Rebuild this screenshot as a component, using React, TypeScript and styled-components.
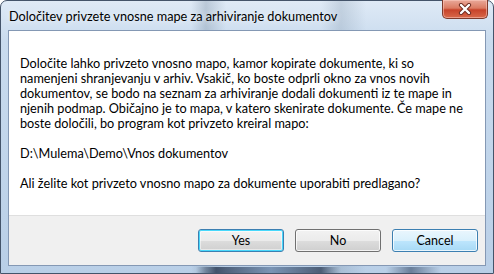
import styled, { createGlobalStyle, css } from "styled-components";

const GlobalStyle = createGlobalStyle`
  html, body {
    margin: 0;
    padding: 0;
    background: #ffffff;
  }
  body {
    font-family: Lato, "Noto Sans", sans-serif;
    font-size: 12px;
  }
`;

const bodyLines = [
  "Določite lahko privzeto vnosno mapo, kamor kopirate dokumente, ki so",
  "namenjeni shranjevanju v arhiv. Vsakič, ko boste odprli okno za vnos novih",
  "dokumentov, se bodo na seznam za arhiviranje dodali dokumenti iz te mape in",
  "njenih podmap. Običajno je to mapa, v katero skenirate dokumente. Če mape ne",
  "boste določili, bo program kot privzeto kreiral mapo:",
];

type ButtonKind = "default" | "normal" | "hover";

export default function App() {
  return (
    <>
      <GlobalStyle />
      <Window>
        <TitleBar>
          <Title>Določitev privzete vnosne mape za arhiviranje dokumentov</Title>
          <CloseButton aria-label="Close">
            <svg width="16" height="12" viewBox="0 0 16 12">
              <path
                d="M4 2 L12 10 M12 2 L4 10"
                stroke="#6b2a20"
                strokeWidth="4.2"
                strokeLinecap="round"
              />
              <path
                d="M4 2 L12 10 M12 2 L4 10"
                stroke="#ffffff"
                strokeWidth="2.4"
                strokeLinecap="round"
              />
            </svg>
          </CloseButton>
        </TitleBar>
        <Client>
          <Content>
            <Paragraph>
              {bodyLines.map((line) => (
                <Line key={line}>{line}</Line>
              ))}
            </Paragraph>
            <Paragraph>D:\Mulema\Demo\Vnos dokumentov</Paragraph>
            <Paragraph>Ali želite kot privzeto vnosno mapo za dokumente uporabiti predlagano?</Paragraph>
          </Content>
          <Footer>
            <DialogButton kind="default">Yes</DialogButton>
            <DialogButton kind="normal">No</DialogButton>
            <DialogButton kind="hover">Cancel</DialogButton>
          </Footer>
        </Client>
      </Window>
    </>
  );
}

const Window = styled.div`
  box-sizing: border-box;
  width: 494px;
  height: 274px;
  display: flex;
  flex-direction: column;
  padding: 0 7px 7px 7px;
  border: 1px solid #44546a;
  border-radius: 7px 7px 0 0;
  background:
    linear-gradient(
        90deg,
        rgba(40, 60, 90, 0) 0,
        rgba(40, 60, 90, 0) 195px,
        rgba(30, 45, 70, 0.75) 215px,
        rgba(60, 90, 130, 0.5) 270px,
        rgba(30, 45, 70, 0.7) 320px,
        rgba(40, 60, 90, 0) 340px,
        rgba(40, 60, 90, 0) 385px,
        rgba(40, 60, 90, 0.55) 410px,
        rgba(40, 60, 90, 0) 440px
      )
      bottom / 100% 6px no-repeat,
    linear-gradient(
      90deg,
      rgba(255, 255, 255, 0) 0,
      rgba(255, 255, 255, 0) 190px,
      rgba(120, 140, 160, 0.35) 205px,
      rgba(255, 255, 255, 0) 225px,
      rgba(255, 255, 255, 0) 320px,
      rgba(120, 140, 160, 0.25) 340px,
      rgba(255, 255, 255, 0) 365px
    ),
    linear-gradient(180deg, #dfeaf6 0, #c9dbee 40px, #b9cfe7 100%);
`;

const TitleBar = styled.div`
  height: 29px;
  display: flex;
  align-items: flex-start;
  justify-content: space-between;
  flex-shrink: 0;
`;

const Title = styled.div`
  padding: 8px 0 0 1px;
  color: #000000;
  font-size: 12.7px;
  line-height: 15px;
  white-space: nowrap;
  text-shadow: 0 0 6px rgba(255, 255, 255, 0.9);
`;

const CloseButton = styled.div`
  box-sizing: border-box;
  width: 46px;
  height: 19px;
  margin-top: -1px;
  margin-right: -2px;
  display: flex;
  align-items: center;
  justify-content: center;
  border: 1px solid #7d3a2c;
  border-top: none;
  border-radius: 0 0 5px 5px;
  background: linear-gradient(180deg, #e9a99a 0, #db7b63 45%, #c7432a 55%, #d8694a 100%);
  box-shadow: inset 0 0 0 1px rgba(255, 210, 200, 0.5);
`;

const Client = styled.div`
  flex: 1;
  display: flex;
  flex-direction: column;
  border: 1px solid #8498b4;
  background: #ffffff;
`;

const Content = styled.div`
  flex: 1;
  display: flex;
  flex-direction: column;
  gap: 15px;
  padding: 25px 12px 0 11px;
  color: #000000;
  font-size: 12.7px;
  line-height: 15px;
`;

const Paragraph = styled.div`
  white-space: nowrap;
`;

const Line = styled.div`
  white-space: nowrap;
`;

const Footer = styled.div`
  height: 49px;
  display: flex;
  align-items: center;
  justify-content: flex-end;
  gap: 11px;
  padding-right: 7px;
  background: #f0f0f0;
  border-top: 1px solid #dfdfdf;
`;

const DialogButton = styled.div<{ kind: ButtonKind }>`
  box-sizing: border-box;
  width: 86px;
  height: 23px;
  display: flex;
  align-items: center;
  justify-content: center;
  border: 1px solid #707070;
  border-radius: 3px;
  color: #000000;
  font-size: 12.5px;
  background: linear-gradient(180deg, #f2f2f2 0, #ebebeb 50%, #dddddd 51%, #cfcfcf 100%);
  box-shadow: inset 0 0 0 1px rgba(255, 255, 255, 0.75);

  ${({ kind }) =>
    kind === "default" &&
    css`
      border-color: #3c7fb1;
      box-shadow: inset 0 0 0 1px #48d8fb, inset 0 0 0 2px rgba(255, 255, 255, 0.5);
    `}

  ${({ kind }) =>
    kind === "hover" &&
    css`
      border-color: #3c7fb1;
      background: linear-gradient(180deg, #eaf6fd 0, #d9f0fc 50%, #bee6fd 51%, #a7d9f5 100%);
    `}
`;
